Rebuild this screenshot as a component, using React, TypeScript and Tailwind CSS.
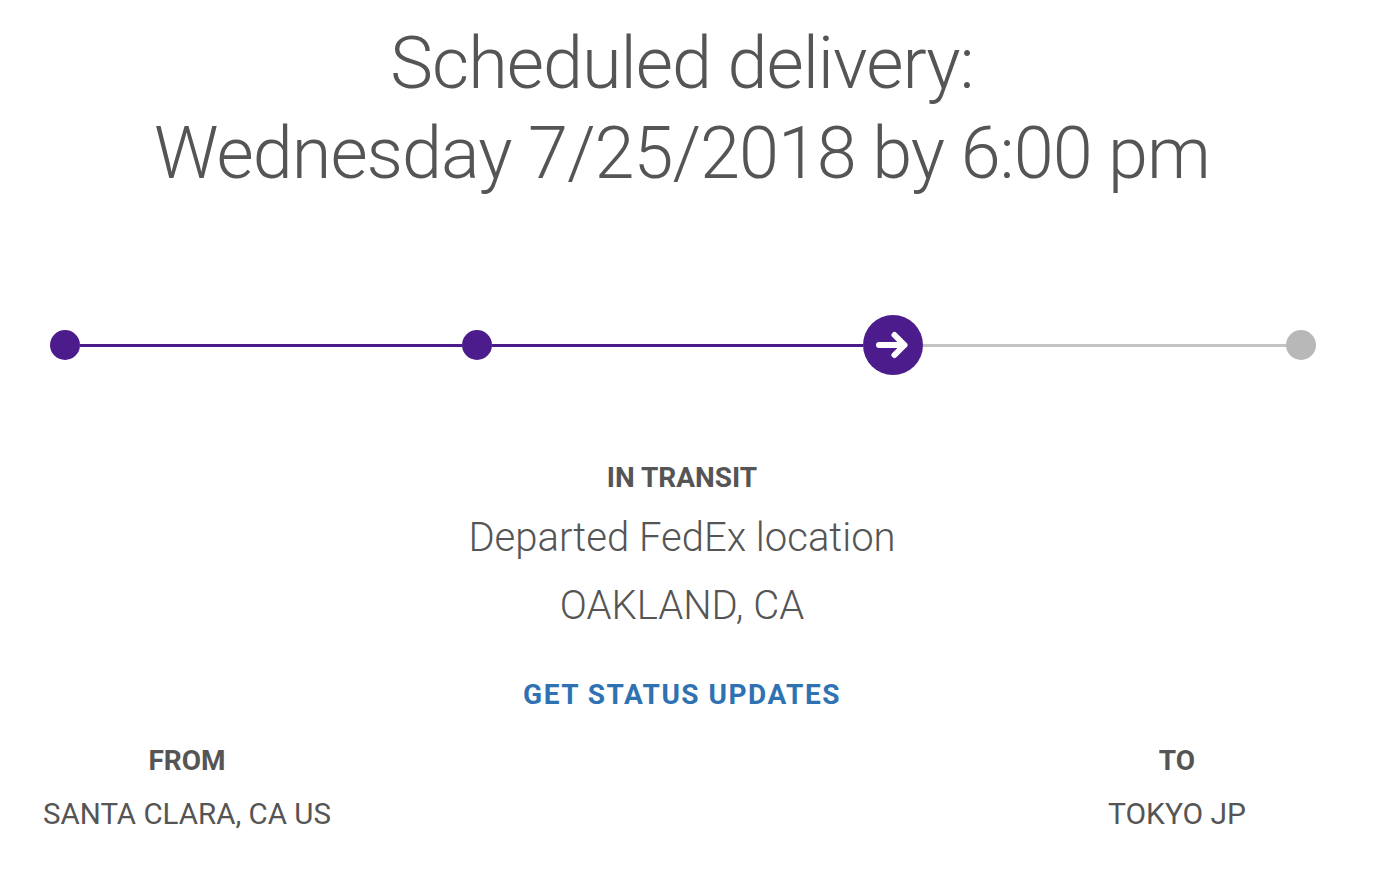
const font = { fontFamily: "Roboto, 'Liberation Sans', sans-serif" };

function Dot({ active }: { active: boolean }) {
  return (
    <span
      className={`block h-[30px] w-[30px] shrink-0 rounded-full ${active ? "bg-[#4d1c8c]" : "bg-[#b8b8b8]"}`}
    />
  );
}

function Line({ width, active }: { width: string; active: boolean }) {
  return <span className={`block h-[3px] ${width} ${active ? "bg-[#4d1c8c]" : "bg-[#c4c4c4]"}`} />;
}

export default function App() {
  return (
    <div className="min-h-[872px] w-[1364px] bg-white text-[#555555]" style={font}>
      <h1 className="pt-[19px] text-center text-[72px] leading-[90px] font-light tracking-[-1px]">
        Scheduled delivery:
        <br />
        Wednesday 7/25/2018 by 6:00 pm
      </h1>

      <div className="mt-[116px] flex h-[60px] items-center pl-[50px]">
        <Dot active />
        <Line width="w-[382px]" active />
        <Dot active />
        <Line width="w-[371px]" active />
        <span className="flex h-[60px] w-[60px] shrink-0 items-center justify-center rounded-full bg-[#4d1c8c]">
          <svg width="36" height="30" viewBox="0 0 36 30" fill="none">
            <path d="M4 15h25" stroke="white" strokeWidth="6" strokeLinecap="round" />
            <path d="M19.5 5 29.5 15 19.5 25" stroke="white" strokeWidth="6" strokeLinecap="round" strokeLinejoin="round" />
          </svg>
        </span>
        <Line width="w-[363px]" active={false} />
        <Dot active={false} />
      </div>

      <div className="mt-[88px] flex flex-col items-center">
        <p className="text-[28px] leading-[30px] font-bold">IN TRANSIT</p>
        <p className="mt-[11px] text-[40px] leading-[68px] font-light">Departed FedEx location</p>
        <p className="text-[40px] leading-[68px] font-light">OAKLAND, CA</p>
        <a className="mt-[39px] text-[28px] leading-[32px] font-bold tracking-[1.5px] text-[#2f72b2]" href="#">
          GET STATUS UPDATES
        </a>
      </div>

      <div className="mt-[34px] flex justify-between">
        <div className="flex w-[374px] flex-col items-center">
          <p className="text-[28px] leading-[32px] font-bold">FROM</p>
          <p className="mt-[19px] text-[29.5px] leading-[36px]">SANTA CLARA, CA US</p>
        </div>
        <div className="flex w-[374px] flex-col items-center">
          <p className="text-[28px] leading-[32px] font-bold">TO</p>
          <p className="mt-[19px] text-[30px] leading-[36px]">TOKYO JP</p>
        </div>
      </div>
    </div>
  );
}
